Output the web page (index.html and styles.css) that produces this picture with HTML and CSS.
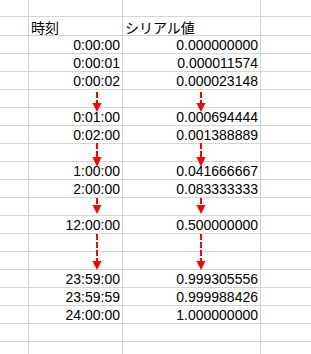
FILE: index.html
```html
<!DOCTYPE html>
<html lang="ja">
<head>
<meta charset="utf-8">
<link rel="stylesheet" href="styles.css">
</head>
<body>
<div class="sheet">
  <div class="row r-top"><div></div><div></div><div></div><div></div></div>
  <div class="row r-head"><div></div><div class="hd">時刻</div><div class="hd">シリアル値</div><div></div></div>
  <div class="row"><div></div><div class="num">0:00:00</div><div class="num">0.000000000</div><div></div></div>
  <div class="row"><div></div><div class="num">0:00:01</div><div class="num">0.000011574</div><div></div></div>
  <div class="row"><div></div><div class="num">0:00:02</div><div class="num">0.000023148</div><div></div></div>
  <div class="row"><div></div><div></div><div></div><div></div></div>
  <div class="row"><div></div><div class="num">0:01:00</div><div class="num">0.000694444</div><div></div></div>
  <div class="row"><div></div><div class="num">0:02:00</div><div class="num">0.001388889</div><div></div></div>
  <div class="row"><div></div><div></div><div></div><div></div></div>
  <div class="row"><div></div><div class="num">1:00:00</div><div class="num">0.041666667</div><div></div></div>
  <div class="row"><div></div><div class="num">2:00:00</div><div class="num">0.083333333</div><div></div></div>
  <div class="row"><div></div><div></div><div></div><div></div></div>
  <div class="row"><div></div><div class="num">12:00:00</div><div class="num">0.500000000</div><div></div></div>
  <div class="row"><div></div><div></div><div></div><div></div></div>
  <div class="row"><div></div><div></div><div></div><div></div></div>
  <div class="row"><div></div><div class="num">23:59:00</div><div class="num">0.999305556</div><div></div></div>
  <div class="row"><div></div><div class="num">23:59:59</div><div class="num">0.999988426</div><div></div></div>
  <div class="row"><div></div><div class="num">24:00:00</div><div class="num">1.000000000</div><div></div></div>
  <div class="row"><div></div><div></div><div></div><div></div></div>
  <div class="row r-last"><div></div><div></div><div></div><div></div></div>
</div>
<svg class="arrows" width="311" height="354" viewBox="0 0 311 354" aria-hidden="true">
  <g stroke="#ff0000" stroke-width="2" stroke-dasharray="6 2" fill="none">
    <line x1="97" y1="92" x2="97" y2="103"/>
    <line x1="201" y1="92" x2="201" y2="103"/>
    <line x1="97" y1="143" x2="97" y2="158"/>
    <line x1="201" y1="143" x2="201" y2="158"/>
    <line x1="97" y1="198" x2="97" y2="206"/>
    <line x1="201" y1="198" x2="201" y2="206"/>
    <line x1="97" y1="234" x2="97" y2="261"/>
    <line x1="201" y1="234" x2="201" y2="261"/>
  </g>
  <g fill="#ff0000">
    <polygon points="92.5,103 101.5,103 97,112"/>
    <polygon points="196.5,103 205.5,103 201,112"/>
    <polygon points="92.5,157 101.5,157 97,167"/>
    <polygon points="196.5,157 205.5,157 201,167"/>
    <polygon points="92.5,205 101.5,205 97,214"/>
    <polygon points="196.5,205 205.5,205 201,214"/>
    <polygon points="92.5,261 101.5,261 97,270"/>
    <polygon points="196.5,261 205.5,261 201,270"/>
  </g>
</svg>
</body>
</html>
```
FILE: styles.css
```css
html, body {
  margin: 0;
  padding: 0;
  background: #ffffff;
}
body {
  width: 311px;
  height: 354px;
  overflow: hidden;
  position: relative;
  font-family: "Liberation Sans", Arial, "Noto Sans CJK JP", sans-serif;
  font-size: 14px;
  color: #000000;
}
.sheet {
  display: flex;
  flex-direction: column;
  gap: 1px;
  height: 354px;
  background: #d4d4d4;
}
.row {
  display: grid;
  grid-template-columns: 28px 93px 137px 1fr;
  gap: 1px;
  height: 17px;
}
.row > div {
  background: #ffffff;
  white-space: nowrap;
}
.r-top { height: 16px; }
.r-head { height: 18px; }
.r-last { height: auto; flex: 1; }
.num {
  text-align: right;
  padding: 1px 2px 0 0;
  line-height: 16px;
}
.hd {
  font-family: "Noto Sans CJK JP", sans-serif;
  padding: 3px 0 0 2px;
  line-height: 15px;
}
.arrows {
  position: absolute;
  left: 0;
  top: 0;
}
```
